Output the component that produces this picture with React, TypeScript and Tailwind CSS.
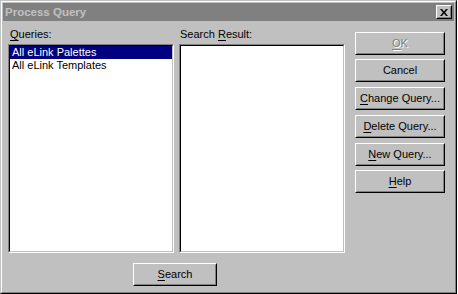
import type { ReactNode } from 'react';

function Btn({ children, className }: { children: ReactNode; className: string }) {
  return (
    <div className={`${className} w-[90px] h-[23px] bg-[#c0c0c0] border border-t-white border-l-white border-r-black border-b-black`}>
      <div className="h-full flex items-center justify-center border border-t-[#c0c0c0] border-l-[#c0c0c0] border-r-[#808080] border-b-[#808080] leading-[13px]">
        {children}
      </div>
    </div>
  );
}

function U({ children }: { children: ReactNode }) {
  return <span className="underline decoration-1 underline-offset-[2px]">{children}</span>;
}

function ListBox({ items, selected }: { items: string[]; selected?: number }) {
  return (
    <div className="w-[166px] h-[209px] border border-t-[#808080] border-l-[#808080] border-r-white border-b-white">
      <div className="h-full bg-white border border-t-black border-l-black border-r-[#c0c0c0] border-b-[#c0c0c0]">
        {items.map((item, i) => (
          <div
            key={item}
            className={`h-[13px] leading-[13px] pl-[2px] ${i === selected ? 'bg-[#000080] text-white' : 'text-black'}`}
          >
            {item}
          </div>
        ))}
      </div>
    </div>
  );
}

export default function App() {
  return (
    <div className="min-h-screen bg-white font-['Liberation_Sans',Arial,sans-serif] text-[11px] text-black">
      <div className="w-[457px] h-[294px] bg-[#c0c0c0] border border-t-[#c0c0c0] border-l-[#c0c0c0] border-r-black border-b-black">
        <div className="h-full flex flex-col p-[1px] border border-t-white border-l-white border-r-[#808080] border-b-[#808080]">
          {/* title bar */}
          <div className="h-[18px] bg-[#808080] flex items-center justify-between pl-[2px] pr-[2px]">
            <span className="text-[11.5px] font-bold text-[#c0c0c0] leading-[14px]">Process Query</span>
            <div className="w-[16px] h-[14px] bg-[#c0c0c0] border border-t-white border-l-white border-r-black border-b-black">
              <div className="h-full flex items-center justify-center border border-t-[#c0c0c0] border-l-[#c0c0c0] border-r-[#808080] border-b-[#808080]">
                <svg width="8" height="7" viewBox="0 0 8 7">
                  <path d="M0 0H2L4 2.4L6 0H8L5.1 3.5L8 7H6L4 4.6L2 7H0L2.9 3.5Z" fill="#000" />
                </svg>
              </div>
            </div>
          </div>

          {/* body */}
          <div className="flex-1 flex pl-[5px] pt-[7px]">
            <div className="w-[337px] flex flex-col">
              <div className="flex leading-[13px]">
                <div className="w-[171px] pl-[2px]">
                  <U>Q</U>ueries:
                </div>
                <div className="pl-[1px]">
                  Search <U>R</U>esult:
                </div>
              </div>
              <div className="mt-[3px] flex gap-[5px]">
                <ListBox items={['All eLink Palettes', 'All eLink Templates']} selected={0} />
                <ListBox items={[]} />
              </div>
              <Btn className="mt-[10px] ml-[125px] !w-[84px]">
                <U>S</U>earch
              </Btn>
            </div>

            <div className="ml-[10px] flex flex-col">
              <Btn className="mt-[4px]">
                <span className="text-[#808080] [text-shadow:1px_1px_0_#ffffff]">
                  <U>O</U>K
                </span>
              </Btn>
              <Btn className="mt-[4px]">Cancel</Btn>
              <Btn className="mt-[5px]">
                <U>C</U>hange Query...
              </Btn>
              <Btn className="mt-[5px]">
                <U>D</U>elete Query...
              </Btn>
              <Btn className="mt-[5px]">
                <U>N</U>ew Query...
              </Btn>
              <Btn className="mt-[4px]">
                <U>H</U>elp
              </Btn>
            </div>
          </div>
        </div>
      </div>
    </div>
  );
}
